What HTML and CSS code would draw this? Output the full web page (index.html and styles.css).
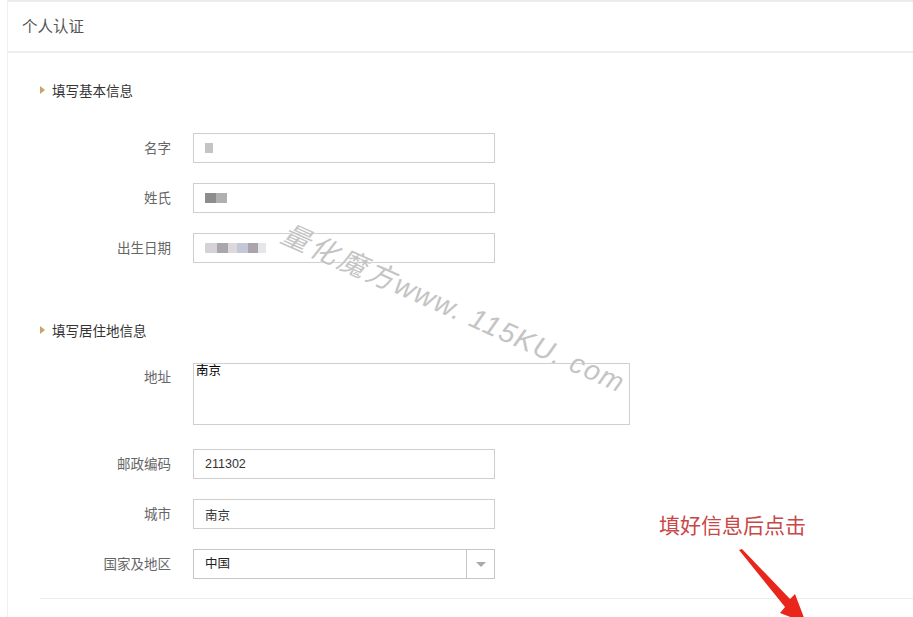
FILE: index.html
```html
<!DOCTYPE html>
<html lang="zh-CN">
<head>
<meta charset="utf-8">
<title>个人认证</title>
<link rel="stylesheet" href="styles.css">
</head>
<body>
<div class="panel">
  <div class="header">个人认证</div>
  <div class="content">
    <div class="section-title"><span class="tri"></span>填写基本信息</div>
    <div class="form basic">
      <div class="row">
        <label class="label">名字</label>
        <div class="input"><span class="blur b1"></span></div>
      </div>
      <div class="row">
        <label class="label">姓氏</label>
        <div class="input"><span class="blur b2"></span><span class="blur b3"></span></div>
      </div>
      <div class="row">
        <label class="label">出生日期</label>
        <div class="input"><span class="blur b4"></span><span class="blur b5"></span><span class="blur b6"></span><span class="blur b7"></span><span class="blur b8"></span><span class="blur b9"></span></div>
      </div>
    </div>
    <div class="section-title second"><span class="tri"></span>填写居住地信息</div>
    <div class="form address">
      <div class="row top">
        <label class="label">地址</label>
        <div class="textarea">南京</div>
      </div>
      <div class="row">
        <label class="label">邮政编码</label>
        <div class="input">211302</div>
      </div>
      <div class="row">
        <label class="label">城市</label>
        <div class="input">南京</div>
      </div>
      <div class="row">
        <label class="label">国家及地区</label>
        <div class="select"><span class="select-value">中国</span><span class="select-btn"><span class="caret"></span></span></div>
      </div>
    </div>
    <div class="divider"></div>
  </div>
</div>
<div class="watermark">量化魔方<span class="wm-latin">www. 115KU. com</span></div>
<div class="note">填好信息后点击</div>
<svg class="arrow" width="100" height="80" viewBox="0 0 100 80">
  <polygon points="19,9 22,8 70,58 75,53 86,82 60,72 65,66" fill="#e8261c"/>
</svg>
</body>
</html>
```

FILE: styles.css
```css
html, body {
  margin: 0;
  padding: 0;
  background: #fff;
  overflow: hidden;
}
body {
  width: 913px;
  height: 617px;
  position: relative;
  font-family: "Liberation Sans", "Noto Sans CJK SC", sans-serif;
  color: #333;
}
.panel {
  margin: 0 0 0 7px;
  border-top: 2px solid #ebebeb;
  border-left: 1px solid #f0f0f0;
  height: 640px;
}
.header {
  height: 49px;
  line-height: 49px;
  padding-left: 14px;
  font-size: 15.5px;
  color: #555;
  border-bottom: 2px solid #eeeeee;
}
.content {
  padding-left: 32px;
  padding-top: 27px;
}
.section-title {
  display: flex;
  align-items: center;
  height: 20px;
  font-size: 13.5px;
  color: #333;
}
.tri {
  width: 0;
  height: 0;
  border-top: 4px solid transparent;
  border-bottom: 4px solid transparent;
  border-left: 5px solid #c9a46a;
  margin-right: 7px;
}
.section-title.second {
  margin-top: 57px;
}
.form {
  display: flex;
  flex-direction: column;
  gap: 20px;
}
.form.basic {
  margin-top: 33px;
}
.form.address {
  margin-top: 23px;
}
.row {
  display: flex;
  align-items: center;
}
.row.top {
  align-items: flex-start;
  margin-bottom: 4px;
}
.label {
  width: 131px;
  margin-right: 22px;
  text-align: right;
  font-size: 13.5px;
  color: #666;
  margin-top: -2px;
}
.row.top .label {
  padding-top: 5px;
}
.input {
  box-sizing: border-box;
  width: 302px;
  height: 30px;
  border: 1px solid #cfcfcf;
  padding-left: 11px;
  display: flex;
  align-items: center;
  font-size: 12.5px;
  color: #333;
}
.textarea {
  box-sizing: border-box;
  width: 437px;
  height: 62px;
  border: 1px solid #cfcfcf;
  padding: 0 2px;
  line-height: 15px;
  font-size: 12.5px;
  color: #000;
}
.select {
  box-sizing: border-box;
  width: 302px;
  height: 30px;
  border: 1px solid #c6c6c6;
  display: flex;
  align-items: stretch;
  font-size: 12.5px;
  color: #222;
}
.select-value {
  flex: 1;
  padding-left: 11px;
  display: flex;
  align-items: center;
  margin-top: -3px;
}
.select-btn {
  width: 27px;
  border-left: 1px solid #c6c6c6;
  display: flex;
  align-items: center;
  justify-content: center;
}
.caret {
  width: 0;
  height: 0;
  border-left: 5px solid transparent;
  border-right: 5px solid transparent;
  border-top: 5px solid #aaa;
}
.divider {
  margin-top: 19px;
  height: 1px;
  background: #ececec;
}
.blur {
  display: inline-block;
  height: 10px;
  filter: blur(0.6px);
}
.b1 { width: 8px; background: #c4c4c4; height: 10px; }
.b2 { width: 11px; background: #8d8d8d; }
.b3 { width: 11px; background: #b0b0b0; }
.b4 { width: 12px; background: #d6d1d6; }
.b5 { width: 11px; background: #aaa6ae; }
.b6 { width: 9px; background: #ddd8dc; }
.b7 { width: 11px; background: #c4c7d6; }
.b8 { width: 10px; background: #aaa4ac; }
.b9 { width: 8px; background: #e6e6ea; }
.watermark {
  position: absolute;
  left: 292px;
  top: 212px;
  transform-origin: 0 0;
  transform: rotate(24deg);
  font-family: "Noto Sans CJK SC", sans-serif;
  font-size: 28px;
  font-style: italic;
  color: #c4c4c4;
  white-space: nowrap;
  letter-spacing: 3px;
  text-shadow: 0 0 2px #fff;
}
.wm-latin {
  font-family: "Liberation Sans", sans-serif;
  font-size: 28px;
  letter-spacing: 1.5px;
}
.note {
  position: absolute;
  left: 659px;
  top: 509px;
  font-family: "Noto Sans CJK SC", sans-serif;
  font-size: 21px;
  color: #c84747;
  line-height: 30px;
}
.arrow {
  position: absolute;
  left: 720px;
  top: 541px;
}
```
